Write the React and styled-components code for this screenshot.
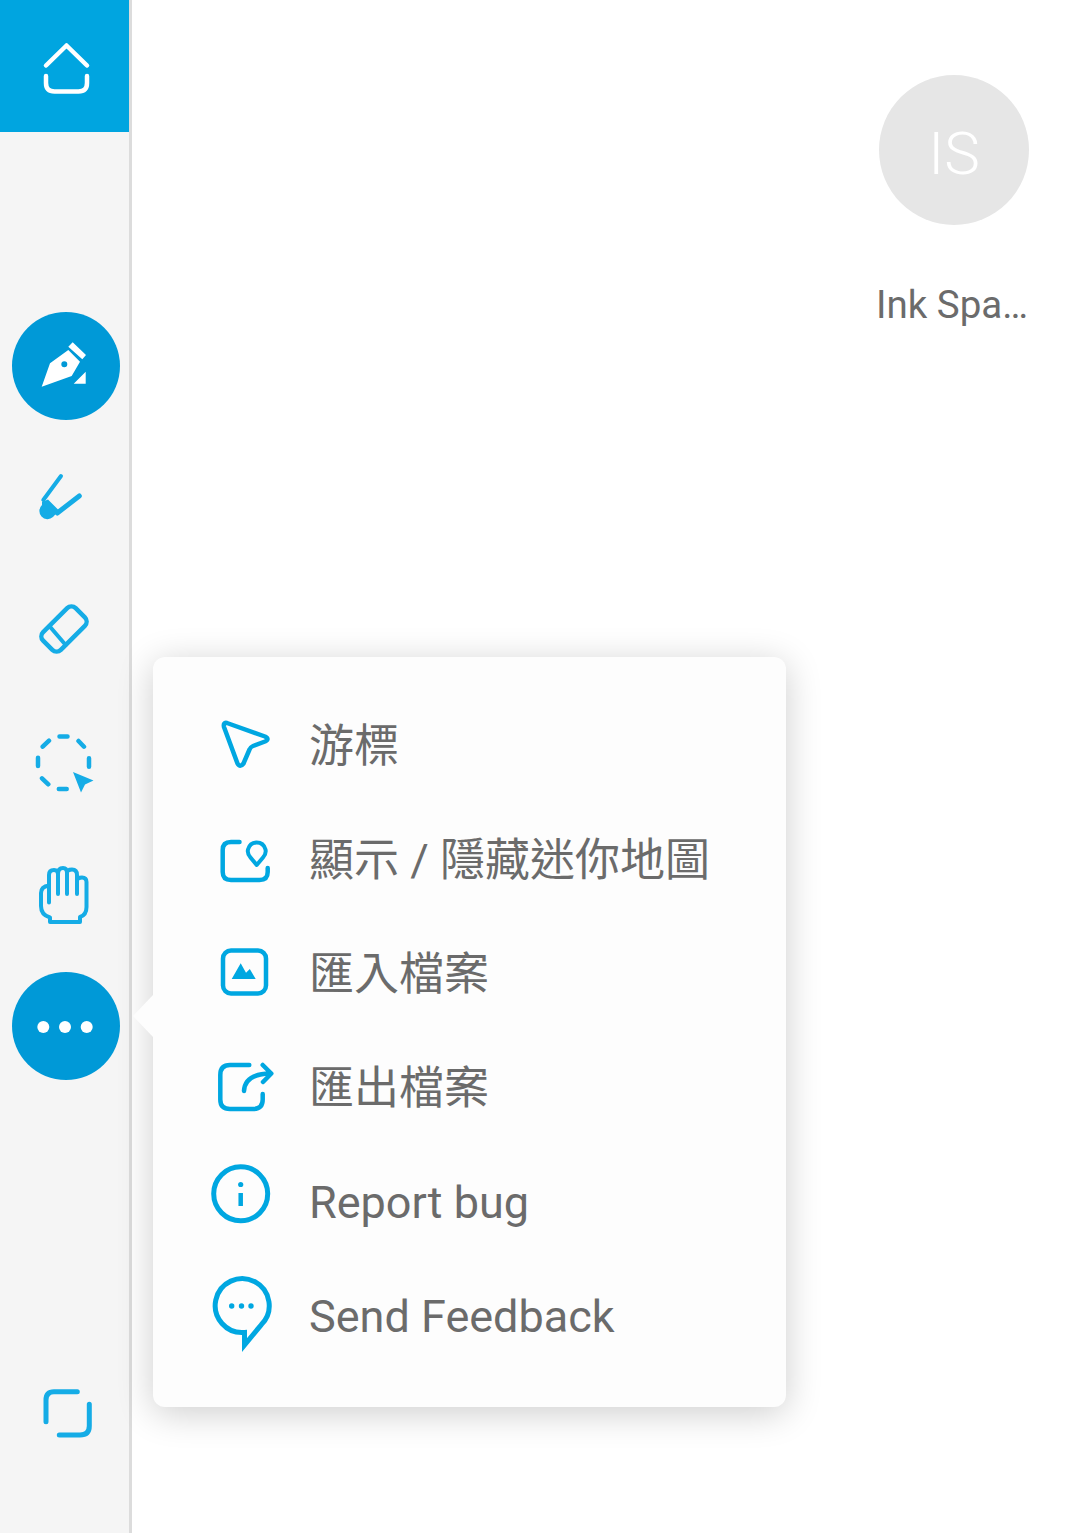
import React from 'react'
import styled, { createGlobalStyle } from 'styled-components'

const Global = createGlobalStyle`
    html, body {
        margin: 0;
        padding: 0;
        background: #fff;
    }
    * {
        box-sizing: border-box;
    }
`

const Page = styled.div`
    position: relative;
    display: flex;
    width: 1080px;
    height: 1533px;
    overflow: hidden;
    background: #fff;
    font-family: Roboto, "Noto Sans CJK TC", sans-serif;
`

const Sidebar = styled.aside`
    display: flex;
    flex-direction: column;
    flex: none;
    width: 132px;
    height: 100%;
    padding-bottom: 54px;
    background: #f5f5f5;
    border-right: 3px solid #dcdcdc;
`

const HomeTile = styled.div`
    display: flex;
    align-items: center;
    justify-content: center;
    flex: none;
    width: 129px;
    height: 132px;
    margin-bottom: 168px;
    background: #00a5e0;
    color: #fff;
`

const Tool = styled.div`
    display: flex;
    align-items: center;
    justify-content: center;
    flex: none;
    width: 108px;
    height: 132px;
    margin-left: 12px;
    color: ${p => p.$light ? '#15ace6' : '#fff'};
`

const BottomTool = styled(Tool)`
    margin-top: auto;
`

const Disc = styled.div`
    display: flex;
    align-items: center;
    justify-content: center;
    width: 108px;
    height: 108px;
    border-radius: 50%;
    background: #0099d7;
`

const Glyph = styled.svg`
    display: block;
    flex: none;
    width: 72px;
    height: 72px;
    overflow: visible;
    fill: none;
    stroke: currentColor;
    stroke-width: ${p => p.$weight || 4.5};
    stroke-linecap: round;
    stroke-linejoin: round;

    .solid {
        fill: currentColor;
        stroke: none;
    }
`

const Main = styled.main`
    display: flex;
    flex: 1;
    justify-content: flex-end;
    padding: 75px 48px 0 0;
`

const Profile = styled.div`
    display: flex;
    flex-direction: column;
    align-items: center;
    width: 156px;
`

const Avatar = styled.div`
    display: flex;
    align-items: center;
    justify-content: center;
    width: 150px;
    height: 150px;
    padding-top: 7px;
    border-radius: 50%;
    background: #e6e6e6;
    color: #fff;
    font-size: 60px;
    font-weight: 300;
`

const ProfileName = styled.div`
    align-self: flex-start;
    width: 153px;
    margin-top: 56px;
    overflow: hidden;
    color: #6b6b6b;
    font-size: 38.5px;
    line-height: 48px;
    white-space: nowrap;
    text-overflow: ellipsis;
`

const Menu = styled.div`
    position: absolute;
    left: 153px;
    top: 657px;
    width: 633px;
    height: 750px;
    padding: 31px 0 35px 52px;
    border-radius: 12px;
    background: #fdfdfd;
    box-shadow: 0 6px 36px rgba(0, 0, 0, 0.2);

    &::before {
        content: "";
        position: absolute;
        left: -20px;
        top: 338px;
        border-style: solid;
        border-width: 21px 20px 21px 0;
        border-color: transparent #fdfdfd transparent transparent;
    }
`

const MenuRow = styled.div`
    display: flex;
    align-items: center;
    gap: 32px;
    height: 114px;
    color: #00a7e1;
`

const MenuLabel = styled.span`
    padding-top: 4px;
    color: #6b6b6b;
    font-size: 45px;
    line-height: 52px;
    white-space: nowrap;
`

// icon coordinates below are page pixels, the viewBox picks the window
const box = (cx, cy) => `${cx - 36} ${cy - 36} 72 72`

const menuItems = [
    {
        label: '游標',
        cy: 745,
        icon: <path d="M227 723 L265 736.5 Q270 739 265 741.5 L253 746 Q250.500 747 249.500 749.500 L243.500 763.500 Q240 768 237.500 763.500 L224 727 Q223 722 227 723 Z" />,
    },
    {
        label: '顯示 / 隱藏迷你地圖',
        cy: 859,
        icon: (
            <>
                <path d="M239.500 842 H231 Q222.700 842 222.700 850 V872 Q222.700 880 231 880 H259.500 Q267.700 880 267.700 872 V868" />
                <path d="M256.700 865 L250.500 857.500 Q247 853.500 248 849.500 Q250 842.500 256.700 842.500 Q263.500 842.500 265.500 849.500 Q266.500 853.500 263 857.500 Z" strokeWidth="4" />
            </>
        ),
    },
    {
        label: '匯入檔案',
        cy: 973,
        icon: (
            <>
                <rect x="223" y="950.500" width="43" height="43" rx="8" />
                <path className="solid" d="M231.700 979 L240.700 963.300 L246 972.700 L249.800 969 L255.700 979 Z" />
            </>
        ),
    },
    {
        label: '匯出檔案',
        cy: 1087,
        icon: (
            <>
                <path d="M249.300 1065 H230 Q220.300 1065 220.300 1075 V1099.500 Q220.300 1109 230 1109 H253 Q262.700 1109 262.700 1099.500 V1094" />
                <path d="M244 1091 Q245 1074 270 1073.500 M262.700 1065 L271.300 1073.500 L263 1082" />
            </>
        ),
    },
    {
        label: 'Report bug',
        cy: 1202,
        icon: (
            <>
                <circle cx="240.700" cy="1194.800" r="27" strokeWidth="5" />
                <circle className="solid" cx="240.700" cy="1185.500" r="2.600" />
                <path d="M240.700 1194 V1207" strokeLinecap="butt" />
            </>
        ),
    },
    {
        label: 'Send Feedback',
        cy: 1316,
        icon: (
            <>
                <path d="M244.500 1346 V1333.500 A27 27 0 1 1 261.400 1325.600 Z" strokeWidth="5" strokeLinejoin="miter" strokeLinecap="butt" />
                <circle className="solid" cx="231.700" cy="1307" r="2.700" />
                <circle className="solid" cx="241.500" cy="1307" r="2.700" />
                <circle className="solid" cx="251" cy="1307" r="2.700" />
            </>
        ),
    },
]

const App = () => {
    return (
        <Page>
            <Global />
            <Sidebar>
                <HomeTile>
                    <Glyph viewBox={box(65.5, 66)}>
                        <path d="M46.500 65.500 L67 45.500 L87.500 65.500" />
                        <path d="M46.500 76 V83 Q46.500 91.500 55 91.500 H79 Q87.500 91.500 87.500 83 V76" />
                    </Glyph>
                </HomeTile>
                <Tool>
                    <Disc>
                        <Glyph viewBox={box(66, 366)}>
                            <path className="solid" fillRule="evenodd" d="M41.700 386.700 L50 363.300 L68.300 350 L80 361.700 L71.700 376 Z M64.300 361.300 A3 3 0 1 0 64.300 367.300 A3 3 0 1 0 64.300 361.300 Z" />
                            <path className="solid" d="M72.700 342.300 L86 355 L82.300 359.300 L68.300 346.700 Z M85.700 371.700 V383.700 H73.700 Z" />
                        </Glyph>
                    </Disc>
                </Tool>
                <Tool $light>
                    <Glyph viewBox={box(66, 498)} $weight={4}>
                        <path d="M61 476 L43.300 500" />
                        <path d="M79.300 496 L57.300 513" strokeWidth="5" />
                        <path className="solid" d="M42 502 L48 499.500 L59 510.500 L53 517 A7.800 7.800 0 1 1 42 505 Z" />
                    </Glyph>
                </Tool>
                <Tool $light>
                    <Glyph viewBox={box(66, 630)}>
                        <rect x="41" y="616.500" width="46" height="25" rx="6" transform="rotate(-45 64 629)" />
                        <path d="M50 626.700 L65.700 645" strokeWidth="4" />
                    </Glyph>
                </Tool>
                <Tool $light>
                    <Glyph viewBox={box(66, 762)}>
                        <path d="M59.500 736.500 H67.500 M78.500 741 L84 746.700 M89 758.300 V766.700 M58.800 789 H66.700 M42 778.300 L48.300 784.300 M38 757.700 V766 M42.700 746.700 L49 740.700" />
                        <path className="solid" d="M73 772 L93.500 780.500 L85 784.500 L81 792.500 Z" />
                    </Glyph>
                </Tool>
                <Tool $light>
                    <Glyph viewBox={box(66, 894)} $weight={4}>
                        <path d="M49 902.500 V875 Q49 870 54 870 Q58 870 58 874 V894 M58 874 Q58 868 63 868 Q67 868 67 873 V894 M67 873 Q67 869.500 72 869.500 Q77 869.500 77 875 V894 M77 881 Q77 877.500 82 877.500 Q86.500 877.500 86.500 882 V907 Q86.500 915 80 917 V922 H50 V917.500 Q41 915 41 906 V893 Q41 886.500 49 885.500" />
                    </Glyph>
                </Tool>
                <Tool>
                    <Disc>
                        <Glyph viewBox={box(66, 1026)}>
                            <circle className="solid" cx="43.300" cy="1027" r="6" />
                            <circle className="solid" cx="65" cy="1027" r="6" />
                            <circle className="solid" cx="86.700" cy="1027" r="6" />
                        </Glyph>
                    </Disc>
                </Tool>
                <BottomTool $light>
                    <Glyph viewBox={box(66, 1413)} $weight={5}>
                        <path d="M77.300 1391.700 H54 Q46 1391.700 46 1400 V1421.700" />
                        <path d="M89.300 1404.300 V1426 Q89.300 1435 80 1435 H59.300" />
                    </Glyph>
                </BottomTool>
            </Sidebar>
            <Main>
                <Profile>
                    <Avatar>IS</Avatar>
                    <ProfileName>Ink Space</ProfileName>
                </Profile>
            </Main>
            <Menu>
                {menuItems.map(item => (
                    <MenuRow key={item.label}>
                        <Glyph viewBox={box(241, item.cy)}>{item.icon}</Glyph>
                        <MenuLabel>{item.label}</MenuLabel>
                    </MenuRow>
                ))}
            </Menu>
        </Page>
    )
}

export default App
